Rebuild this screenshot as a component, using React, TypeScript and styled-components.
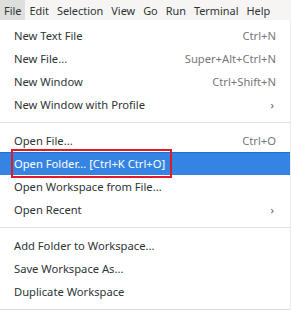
import styled, { createGlobalStyle } from "styled-components";

const GlobalStyle = createGlobalStyle`
  html, body {
    margin: 0;
    padding: 0;
    background: #ffffff;
  }
  body {
    font-family: "Noto Sans", "Open Sans", sans-serif;
    font-size: 11.2px;
    color: #2e3436;
  }
`;

const MENU_ITEM_HEIGHT = 23;

const Page = styled.div`
  width: 291px;
  height: 310px;
  display: flex;
  flex-direction: column;
  overflow: hidden;
`;

const MenuBar = styled.div`
  height: 20px;
  display: flex;
  align-items: stretch;
  background: #f6f5f4;
`;

const MenuTitle = styled.div<{ $active?: boolean }>`
  display: flex;
  align-items: center;
  padding: 0 4px;
  font-size: 10.9px;
  white-space: nowrap;
  background: ${(p) => (p.$active ? "#dededd" : "transparent")};
  color: #2e3436;
`;

const Dropdown = styled.div`
  width: 290px;
  padding: 4px 0 6px;
  background: #ffffff;
  border-bottom: 1px solid #dcdcdc;
  border-right: 1px solid #ececec;
  display: flex;
  flex-direction: column;
`;

const Item = styled.div<{ $selected?: boolean }>`
  height: ${MENU_ITEM_HEIGHT}px;
  display: flex;
  align-items: center;
  justify-content: space-between;
  padding: 0 14px;
  white-space: nowrap;
  background: ${(p) => (p.$selected ? "#3584e4" : "transparent")};
  color: ${(p) => (p.$selected ? "#ffffff" : "#2e3436")};
  box-shadow: ${(p) => (p.$selected ? "inset 0 1px 0 #1c71d8" : "none")};
`;

const Label = styled.span``;

// red annotation box drawn around the selected entry
const Highlight = styled.span`
  display: inline-block;
  line-height: 25px;
  padding: 0 5px 0 1px;
  margin: 0 -7px 0 -3px;
  border: 2px solid #e01b24;
`;

const Shortcut = styled.span`
  color: #77767b;
`;

const Chevron = styled.span`
  color: #5e5c64;
  font-size: 11px;
  margin-right: 2px;
`;

const Separator = styled.div`
  height: 1px;
  margin: 6px 0;
  background: #e0e0e0;
`;

type Entry =
  | { kind: "item"; label: string; shortcut?: string; submenu?: boolean; selected?: boolean }
  | { kind: "sep" };

const entries: Entry[] = [
  { kind: "item", label: "New Text File", shortcut: "Ctrl+N" },
  { kind: "item", label: "New File...", shortcut: "Super+Alt+Ctrl+N" },
  { kind: "item", label: "New Window", shortcut: "Ctrl+Shift+N" },
  { kind: "item", label: "New Window with Profile", submenu: true },
  { kind: "sep" },
  { kind: "item", label: "Open File...", shortcut: "Ctrl+O" },
  { kind: "item", label: "Open Folder... [Ctrl+K Ctrl+O]", selected: true },
  { kind: "item", label: "Open Workspace from File..." },
  { kind: "item", label: "Open Recent", submenu: true },
  { kind: "sep" },
  { kind: "item", label: "Add Folder to Workspace..." },
  { kind: "item", label: "Save Workspace As..." },
  { kind: "item", label: "Duplicate Workspace" },
];

const titles = ["File", "Edit", "Selection", "View", "Go", "Run", "Terminal", "Help"];

export default function App() {
  return (
    <Page>
      <GlobalStyle />
      <MenuBar>
        {titles.map((t, i) => (
          <MenuTitle key={t} $active={i === 0}>
            {t}
          </MenuTitle>
        ))}
      </MenuBar>
      <Dropdown>
        {entries.map((e, i) =>
          e.kind === "sep" ? (
            <Separator key={i} />
          ) : (
            <Item key={i} $selected={e.selected}>
              <Label>{e.selected ? <Highlight>{e.label}</Highlight> : e.label}</Label>
              {e.shortcut && <Shortcut>{e.shortcut}</Shortcut>}
              {e.submenu && <Chevron>›</Chevron>}
            </Item>
          )
        )}
      </Dropdown>
    </Page>
  );
}
